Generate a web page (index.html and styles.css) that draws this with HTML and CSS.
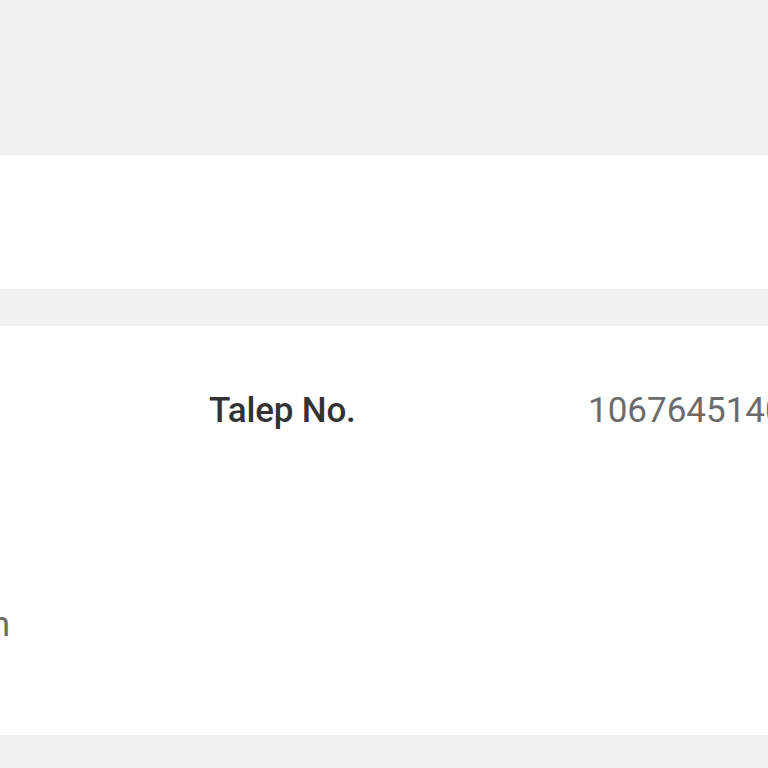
FILE: index.html
```html
<!DOCTYPE html>
<html lang="tr">
<head>
<meta charset="utf-8">
<link rel="stylesheet" href="styles.css">
</head>
<body>
<div class="page">
  <div class="topbar"></div>
  <div class="card card-short"></div>
  <div class="card card-detail">
    <div class="row">
      <div class="label">Talep No.</div>
      <div class="value">1067645140</div>
    </div>
    <div class="row row-second">
      <div class="cut-text">Gönderen</div>
    </div>
  </div>
</div>
</body>
</html>
```
FILE: styles.css
```css
html, body {
  margin: 0;
  padding: 0;
  background: #f1f1f1;
  overflow: hidden;
}
.page {
  width: 768px;
  height: 768px;
  display: flex;
  flex-direction: column;
  font-family: Roboto, "Liberation Sans", sans-serif;
}
.topbar {
  height: 155px;
  flex: none;
}
.card {
  background: #ffffff;
  flex: none;
}
.card-short {
  height: 134px;
  margin-bottom: 37px;
}
.card-detail {
  height: 409px;
  display: flex;
  flex-direction: column;
}
.row {
  display: flex;
  align-items: center;
  white-space: nowrap;
}
.row:first-child {
  margin-top: 62px;
  height: 44px;
}
.label {
  margin-left: 209px;
  width: 379px;
  flex: none;
  font-size: 35px;
  font-weight: 500;
  color: #333333;
  letter-spacing: -0.2px;
}
.value {
  font-size: 35px;
  color: #6b6b6b;
}
.row-second {
  margin-top: 170px;
  height: 44px;
}
.cut-text {
  flex: none;
  width: 300px;
  margin-left: -290px;
  text-align: right;
  font-size: 35px;
  color: #6b6b6b;
}
```
